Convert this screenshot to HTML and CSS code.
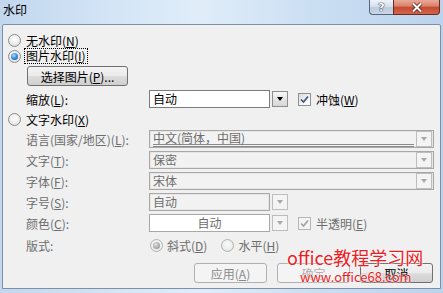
FILE: index.html
```html
<!DOCTYPE html>
<html>
<head>
  <title>水印</title>
  <link rel="stylesheet" href="styles.css">
</head>
<body>
  <div class="window">
    <div class="titlebar">
      <span class="title">水印</span>
      <div class="caps">
        <span class="cap help">?</span>
        <span class="cap close">
          <svg width="14" height="11" viewBox="0 0 14 11">
            <path d="M3 1.5 L11 9.5 M11 1.5 L3 9.5" stroke="#5a1d12" stroke-width="3.6" fill="none"/>
            <path d="M3 1.5 L11 9.5 M11 1.5 L3 9.5" stroke="#fff" stroke-width="2" fill="none"/>
          </svg>
        </span>
      </div>
    </div>

    <div class="client">
      <div class="row opt first">
        <span class="radio"></span>
        <span>无水印(<u>N</u>)</span>
      </div>
      <div class="row opt">
        <span class="radio on"></span>
        <span class="focus">图片水印(<u>I</u>)</span>
      </div>
      <div class="row pick-row">
        <button class="btn pick">选择图片(<u>P</u>)...</button>
      </div>
      <div class="row field scale">
        <span class="label">缩放(<u>L</u>):</span>
        <div class="cbox short"><span class="val">自动</span></div>
        <span class="drop"><i></i></span>
        <span class="check on">
          <svg width="9" height="9" viewBox="0 0 9 9"><path d="M1 4.5 L3.5 7 L8 1.5" fill="none" stroke="currentColor" stroke-width="1.7"/></svg>
        </span>
        <span>冲蚀(<u>W</u>)</span>
      </div>
      <div class="row opt text-opt">
        <span class="radio"></span>
        <span>文字水印(<u>X</u>)</span>
      </div>

      <div class="row field off gap3">
        <span class="label">语言(国家/地区)(<u>L</u>):</span>
        <div class="cbox long off">
          <span class="val lined">中文(简体，中国)</span>
          <span class="drop off"><i></i></span>
        </div>
      </div>
      <div class="row field off gap3">
        <span class="label">文字(<u>T</u>):</span>
        <div class="cbox long off">
          <span class="val">保密</span>
          <span class="drop off"><i></i></span>
        </div>
      </div>
      <div class="row field off gap3">
        <span class="label">字体(<u>F</u>):</span>
        <div class="cbox long off">
          <span class="val">宋体</span>
          <span class="drop off"><i></i></span>
        </div>
      </div>
      <div class="row field off gap3">
        <span class="label">字号(<u>S</u>):</span>
        <div class="cbox short off"><span class="val">自动</span></div>
        <span class="drop off"><i></i></span>
      </div>
      <div class="row field off gap3">
        <span class="label">颜色(<u>C</u>):</span>
        <div class="cbox short white"><span class="val mid">自动</span></div>
        <span class="drop off"><i></i></span>
        <span class="check off">
          <svg width="9" height="9" viewBox="0 0 9 9"><path d="M1 4.5 L3.5 7 L8 1.5" fill="none" stroke="currentColor" stroke-width="1.7"/></svg>
        </span>
        <span>半透明(<u>E</u>)</span>
      </div>
      <div class="row field off layout">
        <span class="label">版式:</span>
        <span class="radio on off"></span>
        <span class="rtext">斜式(<u>D</u>)</span>
        <span class="radio off second"></span>
        <span class="rtext">水平(<u>H</u>)</span>
      </div>

      <div class="row actions">
        <button class="btn off">应用(<u>A</u>)</button>
        <button class="btn faded">确定</button>
        <button class="btn">取消</button>
      </div>
    </div>

    <div class="watermark">
      <div class="brand">office教程学习网</div>
      <div class="url">www.office68.com</div>
    </div>
  </div>
</body>
</html>
```

FILE: styles.css
```css
* { box-sizing: border-box; }
body { margin: 0; font-family: "Noto Sans CJK SC", "Noto Sans", sans-serif; font-size: 12px; color: #000; }

.window { position: relative; width: 443px; height: 293px; overflow: hidden;
  background: linear-gradient(to right, #c2d7ee, #d6e7f7 30%, #e0edf9 45%, #cbdff3 70%, #bcd3ec); }

/* title bar */
.titlebar { height: 24px; display: flex; justify-content: space-between; align-items: flex-start; }
.title { padding: 3px 0 0 3px; line-height: 14px; }
.caps { display: flex; margin-right: 3px; }
.cap { height: 15px; border: 1px solid #56667c; border-top: none; display: flex; align-items: center; justify-content: center; }
.help { width: 24px; border-radius: 0 0 0 4px; border-right: none; color: #fff; font: bold 11px "DejaVu Sans", sans-serif;
  text-shadow: 0 0 1px #2d3b50, 0 0 1px #2d3b50, 0 0 1px #2d3b50;
  background: linear-gradient(#eef3f9, #d3dfec 50%, #bccbdd 51%, #c9d7e6); }
.close { width: 47px; border-radius: 0 0 4px 0; border-color: #6c2a1e;
  background: linear-gradient(#e9aa98, #d8806a 45%, #c54a30 50%, #d2654b); }

/* client area */
.client { margin: 0 2px; height: 265px; background: #f0f0f0; border: 1px solid #7f90a6; border-radius: 2px 2px 0 0;
  padding-top: 7px; }
.row { display: flex; align-items: center; }
u { text-decoration: underline; }

.opt { height: 16px; padding-left: 5px; }
.opt .radio { margin-right: 5px; }
.pick-row { margin-top: 2px; padding-left: 24px; }
.text-opt { margin-top: 3px; }

.radio { width: 13px; height: 13px; flex: none; border-radius: 50%; border: 1px solid #8b8c8c;
  background: radial-gradient(circle at 50% 40%, #fff, #ececec 55%, #cfcfcf);
  display: flex; align-items: center; justify-content: center; }
.radio.on::after { content: ""; width: 7px; height: 7px; border-radius: 50%;
  background: radial-gradient(circle at 40% 35%, #a5dcff, #2f84d6 55%, #0f4f98); }
.radio.off { border-color: #b3b3b3; background: radial-gradient(circle at 50% 40%, #fafafa, #ececec 60%, #dcdcdc); }
.radio.on.off::after { background: radial-gradient(circle at 40% 35%, #e0e0e0, #a8a8a8 60%, #8c8c8c); }

.focus { outline: 1px dotted #000; padding: 0 1px; margin-left: -1px; line-height: 14px; }

.field { height: 18px; padding-left: 23px; }
.field.off { color: #6d6d6d; }
.scale { margin-top: 4px; }
.gap3 { margin-top: 3px; }
.label { width: 123px; flex: none; }

.cbox { height: 18px; border: 1px solid #7b7b7b; background: #fff; display: flex; align-items: center; padding-left: 3px; flex: none; }
.cbox.short { width: 121px; }
.cbox.long { width: 285px; padding-right: 1px; }
.cbox.off { border-color: #a8a8a8; background: #f2f2f2; box-shadow: inset 0 0 0 1px #e6e6e6; color: #6d6d6d; }
.cbox.white { border-color: #a8a8a8; background: #fff; }
.val { flex: 1; line-height: 14px; }
.val.mid { text-align: center; padding-right: 3px; }
.val.lined { border-bottom: 3px double #8a8a8a; line-height: 12px; margin-right: 2px; }

.drop { width: 16px; height: 16px; flex: none; margin-left: 2px; border: 1px solid #8d8d8d;
  background: linear-gradient(#f7f7f7, #e4e4e4 50%, #d7d7d7);
  display: flex; align-items: center; justify-content: center; }
.drop i { width: 0; height: 0; border-left: 3.5px solid transparent; border-right: 3.5px solid transparent; border-top: 4px solid #000; }
.drop.off { border-color: #bdbdbd; background: #f4f4f4; }
.drop.off i { border-top-color: #a9a9a9; }
.cbox .drop { margin-left: 0; }

.check { width: 13px; height: 13px; flex: none; margin: 0 5px 0 10px; border: 1px solid #8e8f8f;
  background: linear-gradient(135deg, #d9d9d9, #f6f6f6 60%, #fff);
  display: flex; align-items: center; justify-content: center; color: #3d5787; }
.check.off { border-color: #b5b5b5; background: #f4f4f4; color: #a3a3a3; }

.layout { height: 16px; margin-top: 5px; }
.layout .label { width: 124px; }
.rtext { margin-left: 4px; }
.radio.second { margin-left: 14px; }

/* bottom buttons */
.actions { justify-content: flex-end; gap: 10px; padding-right: 7px; margin-top: 10px; }
.btn { height: 20px; width: 73px; padding: 0; border: 1px solid #707070; border-radius: 3px;
  font-family: inherit; font-size: 12px; color: #000;
  background: linear-gradient(#f3f3f3, #ebebeb 50%, #dddddd 51%, #cfcfcf); }
.btn.pick { width: 101px; }
.btn.off { border-color: #adb2b5; background: #f4f4f4; color: #8a8a8a; }
.btn.faded { border-color: #adb2b5; background: #f4f4f4; color: #b0b0b0; }

/* overlay stamp from the source site */
.watermark { position: absolute; left: 287px; top: 246px; color: #ec1c24; text-shadow: 0 0 2px #fff, 0 0 2px #fff; }
.brand { font-size: 18px; line-height: 22px; }
.url { font-size: 13px; line-height: 15px; margin: 1px 0 0 13px; }
```
